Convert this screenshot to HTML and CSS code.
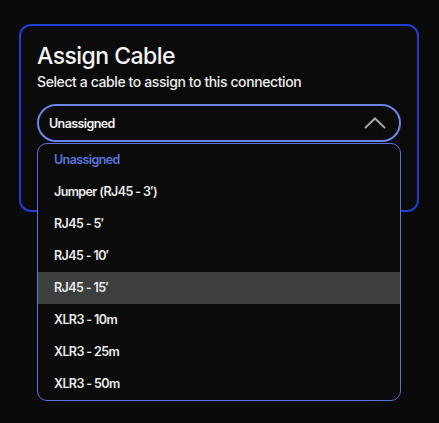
FILE: index.html
```html
<!DOCTYPE html>
<html>
<head>
<meta charset="utf-8">
<link rel="stylesheet" href="styles.css">
</head>
<body>
<div class="card">
  <h1 class="title">Assign Cable</h1>
  <p class="subtitle">Select a cable to assign to this connection</p>
  <div class="select-wrap">
    <div class="select">
      <span class="select-value">Unassigned</span>
      <svg class="chevron" width="22" height="12" viewBox="0 0 22 12"><path d="M1 11 L11 1.5 L21 11" fill="none" stroke="#a3a3a3" stroke-width="2"/></svg>
    </div>
    <ul class="menu">
      <li class="item current">Unassigned</li>
      <li class="item">Jumper (RJ45 - 3′)</li>
      <li class="item">RJ45 - 5′</li>
      <li class="item">RJ45 - 10′</li>
      <li class="item hover">RJ45 - 15′</li>
      <li class="item">XLR3 - 10m</li>
      <li class="item">XLR3 - 25m</li>
      <li class="item">XLR3 - 50m</li>
    </ul>
  </div>
</div>
</body>
</html>
```
FILE: styles.css
```css
html, body {
  margin: 0;
  padding: 0;
  background: #0a0a0a;
  font-family: Inter, "Noto Sans", sans-serif;
}
body {
  padding: 24px 0 0 19px;
  height: 423px;
  box-sizing: border-box;
}
.card {
  width: 400px;
  box-sizing: border-box;
  border: 2px solid #1f3fd4;
  border-radius: 12px;
  background: #0b0b0b;
  padding: 16px 16px 68px 16px;
}
.title {
  margin: 0;
  font-size: 23px;
  font-weight: 500;
  line-height: 28px;
  color: #f5f5f5;
  letter-spacing: -0.55px;
}
.subtitle {
  margin: 2px 0 0 0;
  font-size: 14px;
  font-weight: 500;
  line-height: 20px;
  color: #ededed;
  letter-spacing: -0.4px;
}
.select-wrap {
  position: relative;
  margin-top: 12px;
}
.select {
  height: 38px;
  box-sizing: border-box;
  border: 2px solid #6b86ec;
  border-radius: 19px;
  display: flex;
  align-items: center;
  justify-content: space-between;
  padding: 0 13px 0 10px;
}
.select-value {
  font-size: 12.5px;
  font-weight: 600;
  color: #f2f2f2;
  letter-spacing: -0.6px;
}
.chevron {
  display: block;
}
.menu {
  position: absolute;
  left: 0;
  right: 0;
  top: 39px;
  margin: 0;
  padding: 0;
  list-style: none;
  border: 1px solid #5d72d6;
  border-radius: 10px;
  background: #0b0b0b;
  overflow: hidden;
}
.item {
  height: 32px;
  line-height: 32px;
  padding-left: 16px;
  font-size: 12.5px;
  font-weight: 600;
  color: #ececec;
  letter-spacing: -0.6px;
}
.item.current {
  color: #5b74dc;
}
.item.hover {
  background: #3d3e3e;
}
```
